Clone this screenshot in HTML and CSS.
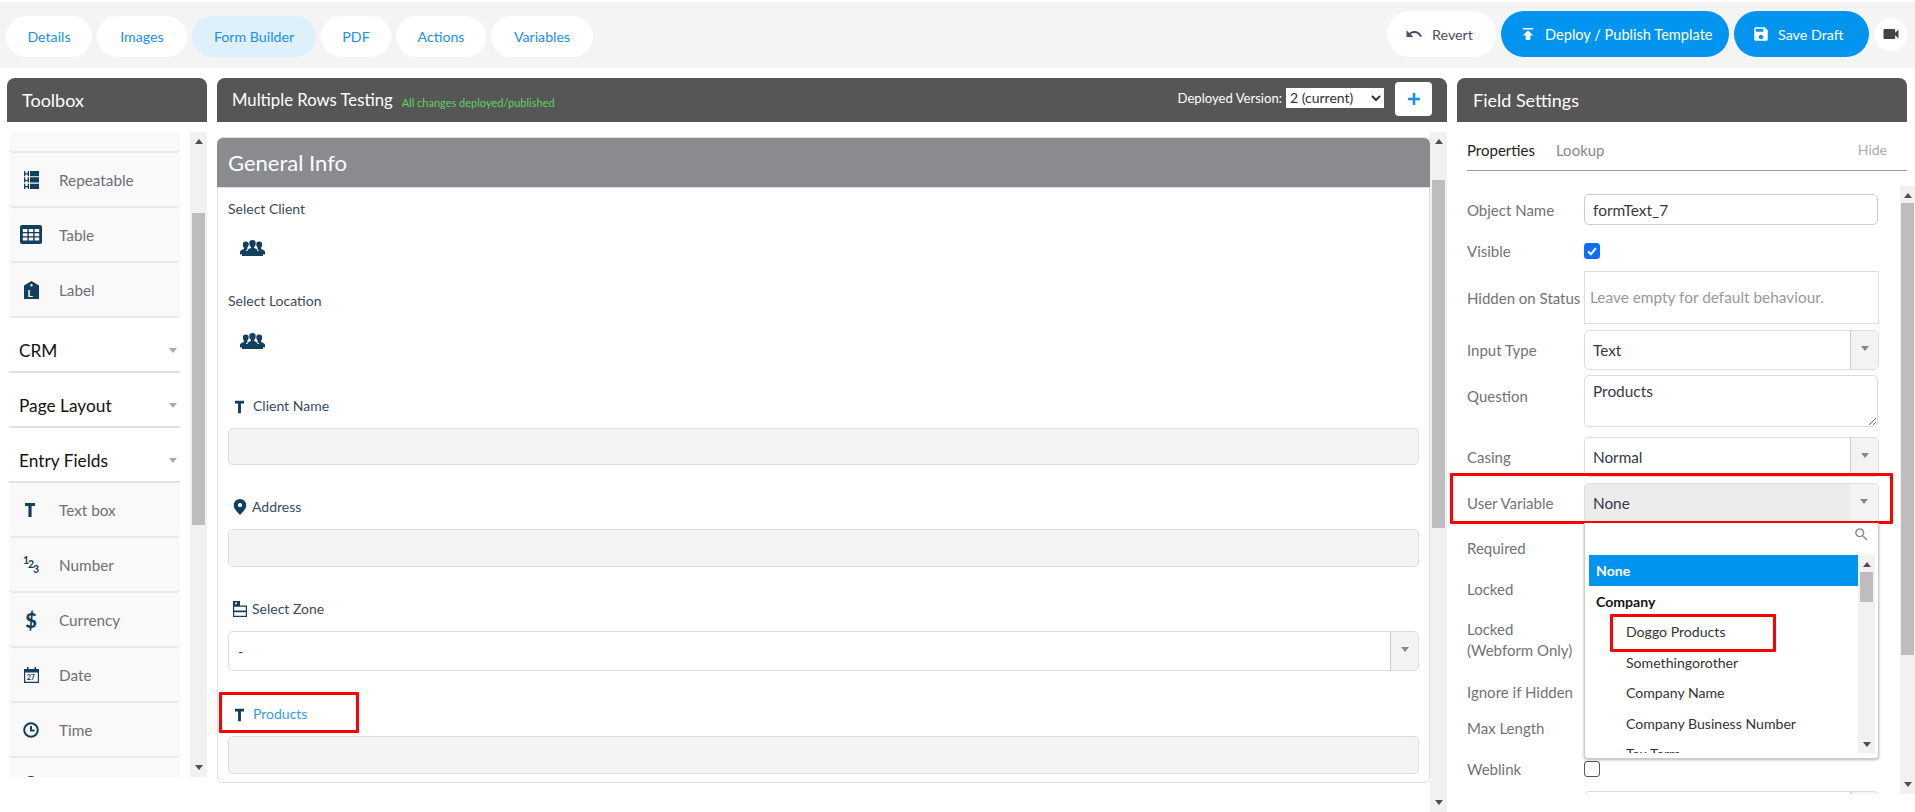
FILE: index.html
```html
<!DOCTYPE html>
<html lang="en">
<head>
<meta charset="utf-8">
<title>Form Builder</title>
<link rel="stylesheet" href="styles.css">
</head>
<body>
<svg class="defs" width="0" height="0" aria-hidden="true">
  <symbol id="i-t" viewBox="0 0 10 14"><path d="M0 0h10v3H6.600v11H3.400V3H0z"/></symbol>
  <symbol id="i-pin" viewBox="0 0 14 18"><path fill-rule="evenodd" d="M7 0a7 7 0 0 1 7 7c0 4-3.500 7.500-7 11C3.500 14.500 0 11 0 7a7 7 0 0 1 7-7zm0 4.600a2.400 2.400 0 1 0 0 4.800 2.400 2.400 0 0 0 0-4.800z"/></symbol>
  <symbol id="i-people" viewBox="0 0 25 16"><path d="M12.500 0a3.200 3.200 0 0 1 3.200 3.400c0 1.700-.9 3-1.700 3.700v.9c1.800.5 3.400 1.200 3.400 2.600V16H7.600v-5.400c0-1.400 1.600-2.100 3.400-2.600v-.9c-.8-.7-1.700-2-1.700-3.700A3.200 3.200 0 0 1 12.500 0z"/><path d="M5.800 1.500a2.900 2.900 0 0 1 2.900 3.100c0 1.500-.8 2.600-1.500 3.200v1l.8.3c-1.200.5-2 1.200-2 2.400V16H2v-1.700L0 14.500v-2.800c0-1.300 1.900-2.200 4-2.800v-1.100C3.300 7.200 2.900 6.100 2.900 4.600A2.900 2.900 0 0 1 5.800 1.500z"/><path d="M19.200 1.500a2.900 2.900 0 0 0-2.900 3.100c0 1.500.8 2.600 1.500 3.200v1l-.8.3c1.200.5 2 1.200 2 2.400V16H23v-1.700l2 .2v-2.800c0-1.300-1.900-2.200-4-2.800v-1.100c.7-.6 1.100-1.700 1.100-3.200a2.900 2.900 0 0 0-2.900-3.100z"/><path d="M4 11h17v5H4z"/></symbol>
  <symbol id="i-zone" viewBox="0 0 14 16"><path fill-rule="evenodd" d="M0 0h7v4.500h7V16H0zm1.200 5.700v3.800h11.600V5.700zm0 5.600v3.500h11.600v-3.500zM2 1.500v1.800h2V1.500z"/></symbol>
  <symbol id="i-search" viewBox="0 0 24 24"><path d="M15.500 14h-.79l-.28-.27A6.470 6.470 0 0 0 16 9.500 6.500 6.500 0 1 0 9.500 16c1.610 0 3.090-.59 4.230-1.570l.27.28v.79l5 4.990L20.490 19l-4.990-5zm-6 0C7.010 14 5 11.990 5 9.500S7.010 5 9.500 5 14 7.010 14 9.500 11.990 14 9.500 14z"/></symbol>
</svg>

<div class="page">
  <header class="topbar">
    <nav class="tabs">
      <a class="tab tab-details">Details</a>
      <a class="tab tab-images">Images</a>
      <a class="tab tab-form is-active">Form Builder</a>
      <a class="tab tab-pdf">PDF</a>
      <a class="tab tab-actions">Actions</a>
      <a class="tab tab-variables">Variables</a>
    </nav>
    <div class="actions">
      <button class="btn btn-light btn-revert"><svg class="btn-icon" viewBox="0 0 24 24"><path d="M12.500 8c-2.650 0-5.050 1-6.900 2.600L2 7v9h9l-3.600-3.600c1.400-1.200 3.200-1.900 5.100-1.900 3.500 0 6.600 2.300 7.600 5.500l2.400-.8C21.100 11 17.200 8 12.500 8z"/></svg>Revert</button>
      <button class="btn btn-blue btn-deploy"><svg class="btn-icon" viewBox="0 0 24 24"><path d="M5 4v2h14V4H5zm0 10h4v6h6v-6h4l-7-7-7 7z"/></svg>Deploy / Publish Template</button>
      <button class="btn btn-blue btn-save"><svg class="btn-icon" viewBox="0 0 24 24"><path d="M17 3H5c-1.100 0-2 .9-2 2v14c0 1.100.9 2 2 2h14c1.100 0 2-.9 2-2V7l-4-4zm-5 16c-1.700 0-3-1.300-3-3s1.300-3 3-3 3 1.300 3 3-1.300 3-3 3zm3-10H5V5h10v4z"/></svg>Save Draft</button>
      <button class="btn-video" aria-label="Video"><svg viewBox="0 0 24 24"><path d="M17 10.500V7c0-.6-.4-1-1-1H4c-.6 0-1 .4-1 1v10c0 .6.400 1 1 1h12c.6 0 1-.4 1-1v-3.500l4 4v-11l-4 4z"/></svg></button>
    </div>
  </header>

  <main class="workspace">
    <section class="col-toolbox">
      <h2 class="panel-head">Toolbox</h2>
      <div class="toolbox-body">
        <div class="toolbox-list">
          <div class="tool tool-cut"></div>
          <div class="tool"><span class="tool-icon"><svg class="ic-rep" viewBox="0 0 15 18"><path d="M0 0h1.300v2.300h2.400V0H5v5.300H3.700V3.500H1.300v1.800H0zm0 6.300h1.300v2.400h2.400V6.300H5v5.300H3.700V9.900H1.300v1.700H0zm0 6.400h1.300V15h2.400v-2.300H5V18H3.700v-1.800H1.300V18H0z"/><path d="M6 0h9v5.300H6zm0 6.300h9v5.300H6zm0 6.400h9V18H6z"/></svg></span>Repeatable</div>
          <div class="tool"><span class="tool-icon"><svg class="ic-table" viewBox="0 0 22 19"><path fill-rule="evenodd" d="M2 0h18a2 2 0 0 1 2 2v15a2 2 0 0 1-2 2H2a2 2 0 0 1-2-2V2a2 2 0 0 1 2-2zm.8 4v3h4.600V4zm6 0v3h4.400V4zm5.800 0v3h4.600V4zM2.800 8.300v3h4.600v-3zm6 0v3h4.400v-3zm5.800 0v3h4.600v-3zM2.800 12.600v3h4.600v-3zm6 0v3h4.400v-3zm5.800 0v3h4.600v-3z"/></svg></span>Table</div>
          <div class="tool"><span class="tool-icon"><svg class="ic-label" viewBox="0 0 15 18"><path fill-rule="evenodd" d="M7.500 0 15 4.500V18H0V4.500zm0 3a1.200 1.200 0 1 0 0 2.400 1.200 1.200 0 0 0 0-2.400z"/><text class="ic-letter" x="3.500" y="15.500">L</text></svg></span>Label</div>
          <div class="tool-section">CRM<i class="caret"></i></div>
          <div class="tool-section">Page Layout<i class="caret"></i></div>
          <div class="tool-section">Entry Fields<i class="caret"></i></div>
          <div class="tool"><span class="tool-icon"><svg class="ic-t"><use href="#i-t"/></svg></span>Text box</div>
          <div class="tool"><span class="tool-icon"><svg class="ic-num" viewBox="0 0 16 17"><text x="0" y="8">1</text><text x="5" y="12">2</text><text x="10" y="16.500">3</text></svg></span>Number</div>
          <div class="tool"><span class="tool-icon"><span class="ic-dollar">$</span></span>Currency</div>
          <div class="tool"><span class="tool-icon"><svg class="ic-cal" viewBox="0 0 15 16"><path fill-rule="evenodd" d="M0 2h3V0h1.500v2h6V0H12v2h3v14H0zm1.200 3.500v9.300h12.600V5.500z"/><text x="2.800" y="13">27</text></svg></span>Date</div>
          <div class="tool"><span class="tool-icon"><svg class="ic-clock" viewBox="0 0 16 16"><circle cx="8" cy="8" r="6.800"/><path d="M8 4v4.500h3.500"/></svg></span>Time</div>
          <div class="tool"><span class="tool-icon"><svg class="ic-pin-s"><use href="#i-pin"/></svg></span></div>
        </div>
        <div class="scrollbar sb-toolbox"><i class="arrow-up"></i><b class="thumb"></b><i class="arrow-down"></i></div>
      </div>
    </section>

    <section class="col-form">
      <div class="panel-head head-form">
        <h2 class="form-title">Multiple Rows Testing</h2>
        <span class="form-status">All changes deployed/published</span>
        <label class="version">Deployed Version:
          <select class="version-select"><option>2 (current)</option></select>
        </label>
        <button class="plus" aria-label="Add"><svg viewBox="0 0 14 14"><path d="M5.500 0h3v5.500H14v3H8.500V14h-3V8.500H0v-3h5.500z"/></svg></button>
      </div>
      <div class="form-body">
        <div class="card">
          <h3 class="card-head">General Info</h3>
          <div class="card-body">
            <div class="q q-client">Select Client</div>
            <svg class="people p-client"><use href="#i-people"/></svg>
            <div class="q q-location">Select Location</div>
            <svg class="people p-location"><use href="#i-people"/></svg>
            <div class="q q-icon q-name"><svg class="ic-t-sm"><use href="#i-t"/></svg>Client Name</div>
            <div class="box box-name"></div>
            <div class="q q-icon q-addr"><svg class="ic-pin"><use href="#i-pin"/></svg>Address</div>
            <div class="box"></div>
            <div class="q q-icon q-zone"><svg class="ic-zone"><use href="#i-zone"/></svg>Select Zone</div>
            <div class="pick pick-zone"><span class="pick-val">-</span><span class="pick-arrow"><i class="caret-sm"></i></span></div>
            <div class="q q-icon q-prod"><svg class="ic-t-sm"><use href="#i-t"/></svg><span class="active-q">Products</span><span class="mark mark-prod"></span></div>
            <div class="box"></div>
          </div>
        </div>
        <div class="scrollbar sb-form"><i class="arrow-up"></i><b class="thumb"></b><i class="arrow-down"></i></div>
      </div>
    </section>

    <section class="col-settings">
      <h2 class="panel-head head-settings">Field Settings</h2>
      <div class="fs-tabs"><span class="fs-tab is-on">Properties</span><span class="fs-tab">Lookup</span><span class="fs-hide">Hide</span></div>
      <div class="fs-scroll">
        <div class="fs-form">
          <div class="row r-name"><label class="lab">Object Name</label><input class="inp" value="formText_7"></div>
          <div class="row r-vis"><label class="lab">Visible</label><span class="check is-on"><svg viewBox="0 0 16 16"><path d="M3.500 8.500 6.700 11.700 12.500 4.800"/></svg></span></div>
          <div class="row r-hidden"><label class="lab">Hidden on Status</label><textarea class="ta ta-hidden" placeholder="Leave empty for default behaviour."></textarea></div>
          <div class="row r-sel r-type"><label class="lab">Input Type</label><div class="pick"><span class="pick-val">Text</span><span class="pick-arrow"><i class="caret-sm"></i></span></div></div>
          <div class="row r-q"><label class="lab">Question</label><textarea class="ta ta-q">Products</textarea></div>
          <div class="row r-sel r-casing"><label class="lab">Casing</label><div class="pick"><span class="pick-val">Normal</span><span class="pick-arrow"><i class="caret-sm"></i></span></div></div>
          <div class="row r-sel r-var">
            <label class="lab">User Variable</label>
            <div class="pick pick-open"><span class="pick-val">None</span><span class="pick-arrow"><i class="caret-sm"></i></span>
              <div class="drop">
                <div class="drop-search"><svg class="ic-search"><use href="#i-search"/></svg></div>
                <div class="drop-main">
                  <ul class="opts">
                    <li class="opt opt-sel">None</li>
                    <li class="opt opt-group">Company</li>
                    <li class="opt opt-child">Doggo Products<span class="mark mark-opt"></span></li>
                    <li class="opt opt-child">Somethingorother</li>
                    <li class="opt opt-child">Company Name</li>
                    <li class="opt opt-child">Company Business Number</li>
                    <li class="opt opt-child">Tax Term</li>
                  </ul>
                  <div class="scrollbar sb-drop"><i class="arrow-up"></i><b class="thumb"></b><i class="arrow-down"></i></div>
                </div>
              </div>
            </div>
            <span class="mark mark-var"></span>
          </div>
          <div class="row r-line r-req"><label class="lab">Required</label></div>
          <div class="row r-line r-lock"><label class="lab">Locked</label></div>
          <div class="row r-line r-lockw"><label class="lab lab-two">Locked<br>(Webform Only)</label></div>
          <div class="row r-line r-ign"><label class="lab">Ignore if Hidden</label></div>
          <div class="row r-line r-max"><label class="lab">Max Length</label></div>
          <div class="row r-web"><label class="lab">Weblink</label><span class="check"></span></div>
          <div class="row r-sel r-next"><label class="lab"></label><div class="pick"><span class="pick-val"></span><span class="pick-arrow"></span></div></div>
        </div>
        <div class="scrollbar sb-fs"><i class="arrow-up"></i><b class="thumb"></b><i class="arrow-down"></i></div>
      </div>
    </section>
  </main>
</div>
</body>
</html>
```
FILE: styles.css
```css
* { box-sizing: border-box; }
html, body { margin: 0; height: 812px; overflow: hidden; background: #fff; }
body { font-family: "Lato", "Open Sans", sans-serif; font-size: 14px; color: #333; }
h2, h3, ul { margin: 0; padding: 0; font-weight: 400; }
.defs { position: absolute; }
.page { width: 1915px; height: 812px; overflow: hidden; }

/* top bar */
.topbar { margin-top: 2px; height: 66px; background: #f4f4f4; display: flex; justify-content: space-between; padding: 0 8px 0 6px; }
.tabs { display: flex; gap: 5px; padding-top: 14px; }
.tab { height: 41px; border-radius: 21px; background: #fff; color: #1a8fec; display: flex; align-items: center; justify-content: center; font-size: 14.200px; }
.tab.is-active { background: #dff0fd; }
.tab-details { width: 86px; }
.tab-images { width: 90px; }
.tab-form { width: 124px; }
.tab-pdf { width: 70px; }
.tab-actions { width: 90px; }
.tab-variables { width: 102px; }
.actions { display: flex; align-items: center; gap: 5px; padding-bottom: 2px; }
.btn { height: 46px; border: 0; border-radius: 23px; display: flex; align-items: center; font: inherit; font-size: 14.300px; white-space: nowrap; }
.btn-icon { width: 18px; height: 18px; fill: currentColor; flex: none; }
.btn-light { background: #fff; color: #4a4f63; }
.btn-blue { background: #0394f0; color: #fff; }
.btn-revert { width: 109px; padding-left: 18px; gap: 9px; }
.btn-deploy { width: 228px; padding-left: 18px; gap: 8px; font-size: 14.600px; }
.btn-save { width: 135px; padding-left: 18px; gap: 8px; }
.btn-video { width: 33px; height: 33px; border: 0; padding: 0; border-radius: 50%; background: #fff; display: flex; align-items: center; justify-content: center; }
.btn-video svg { width: 20px; height: 20px; fill: #444; }

/* columns */
.workspace { display: grid; grid-template-columns: 200px 1230px 458px; column-gap: 10px; padding: 10px 0 0 7px; }
.panel-head { height: 44px; background: #565656; color: #fff; border-radius: 8px 8px 0 0; display: flex; align-items: center; padding-left: 15px; font-size: 18px; }

/* toolbox */
.toolbox-body { display: flex; justify-content: space-between; margin-top: 10px; height: 645px; }
.toolbox-list { width: 173px; height: 645px; overflow: hidden; padding-left: 2px; }
.tool { height: 55px; background: #f9f9f9; border-bottom: 2px solid #e9e9e9; border-radius: 4px; display: flex; align-items: center; color: #6c7078; font-size: 15.300px; }
.tool-cut { height: 21px; }
.tool-icon { width: 50px; flex: none; display: flex; justify-content: center; padding-right: 6px; color: #123f5e; }
.tool-icon svg { fill: #123f5e; }
.ic-rep { width: 15px; height: 18px; }
.ic-table { width: 22px; height: 19px; }
.ic-label { width: 15px; height: 18px; }
.ic-letter { fill: #fff; font: 700 10px "Lato", sans-serif; }
.ic-t { width: 10px; height: 14px; margin-right: 3px; }
.ic-num { width: 16px; height: 17px; overflow: visible; font: 700 10.500px "Lato", sans-serif; }
.ic-dollar { font: 900 20px/1 "Lato", sans-serif; }
.ic-cal { width: 15px; height: 16px; }
.ic-cal text { font: 700 7px "Lato", sans-serif; }
.tool-icon .ic-clock { width: 16px; height: 16px; fill: none; stroke: #123f5e; stroke-width: 2; }
.ic-pin-s { width: 14px; height: 18px; }
.tool-section { height: 55px; border-bottom: 2px solid #e2e2e2; display: flex; align-items: center; justify-content: space-between; padding: 12px 3px 0 10px; color: #111; font-size: 17.300px; background: #fff; }
.caret { border: 4px solid transparent; border-top: 5px solid #aaa; border-bottom: 0; }

/* scrollbars */
.scrollbar { width: 17px; background: #f1f1f1; display: flex; flex-direction: column; align-items: center; }
.thumb { display: block; width: 13px; background: #bdbdbd; }
.arrow-up, .arrow-down { display: block; width: 0; height: 0; border: 4px solid transparent; flex: none; }
.arrow-up { border-top: 0; border-bottom: 5px solid #505050; margin-top: 7px; }
.arrow-down { border-bottom: 0; border-top: 5px solid #505050; margin-top: auto; margin-bottom: 7px; }
.sb-toolbox .thumb { margin-top: 69px; height: 312px; }
.sb-form { height: 680px; }
.sb-form .thumb { margin-top: 36px; height: 348px; }
.sb-fs { width: 15px; height: 608px; flex: none; }
.sb-fs .thumb { margin-top: 5px; height: 452px; }
.sb-drop { height: 199px; flex: none; }
.sb-drop .thumb { margin-top: 5px; height: 30px; }

/* form column */
.head-form { padding-right: 15px; gap: 9px; }
.form-title { font-size: 16.700px; }
.form-status { color: #5fd35f; font-size: 11px; padding-top: 5px; }
.version { margin: 0 0 5px auto; display: flex; align-items: center; gap: 4px; font-size: 13.100px; white-space: nowrap; }
.version-select { width: 98px; height: 20px; margin-right: 2px; font: 14px "Lato", sans-serif; border: 0; background: #fff; color: #333; border-radius: 0; }
.plus { width: 37px; height: 34px; margin-bottom: 3px; border: 0; padding: 0; border-radius: 4px; background: #fff; display: flex; align-items: center; justify-content: center; }
.plus svg { width: 12px; height: 12px; fill: #1a8fec; }
.form-body { display: flex; justify-content: space-between; margin-top: 10px; height: 680px; }
.card { margin-top: 5px; width: 1213px; height: 646px; border: 1px solid #ddd; border-radius: 6px; }
.card-head { height: 50px; margin: 0 -1px; padding-left: 11px; background: #898b8e; color: #fff; font-size: 22px; display: flex; align-items: center; border-radius: 6px 6px 0 0; border-bottom: 1px solid #ddd; }
.card-body { padding: 0 10px; }
.q { height: 20px; line-height: 22px; color: #3a4a60; font-size: 14px; position: relative; }
.q-icon { display: flex; align-items: center; padding-left: 5px; }
.q-client { margin-top: 10px; }
.people { display: block; width: 25px; height: 16px; margin-left: 12px; fill: #123f5e; }
.p-client { margin-top: 22px; }
.q-location { margin-top: 34px; }
.p-location { margin-top: 23px; }
.q-name { margin-top: 47px; }
.q-addr { margin-top: 32px; }
.q-zone { margin-top: 32px; }
.q-prod { margin-top: 33px; }
.ic-t-sm { width: 9px; height: 14px; margin: 1px 9px 0 2px; fill: #123f5e; }
.ic-pin { width: 14px; height: 16px; margin-right: 5px; fill: #123f5e; }
.ic-zone { width: 14px; height: 16px; margin-right: 5px; fill: #123f5e; }
.active-q { color: #3a9bf0; }
.box { height: 38px; margin-top: 12px; background: #f4f4f4; border: 1px solid #ddd; border-radius: 5px; }
.box-name { height: 37px; }
.pick { flex: 1; height: 40px; background: #fff; border: 1px solid #ddd; border-radius: 5px; display: flex; align-items: stretch; position: relative; }
.pick-val { flex: 1; display: flex; align-items: center; padding-left: 8px; color: #333a45; font-size: 15.300px; }
.pick-arrow { width: 28px; background: #f3f3f3; border-left: 1px solid #ccc; border-radius: 0 4px 4px 0; display: flex; align-items: center; justify-content: center; }
.caret-sm { border: 4px solid transparent; border-top: 5px solid #888; border-bottom: 0; margin-bottom: 3px; }
.pick-zone { margin-top: 12px; }
.pick-zone .pick-val { padding-left: 9px; font-size: 14px; }
.mark { position: absolute; border: 3px solid #f00; border-radius: 1px; pointer-events: none; }
.mark-prod { left: -9px; top: -12px; width: 140px; height: 41px; }

/* settings column */
.head-settings { width: 450px; padding-left: 16px; }
.fs-tabs { width: 440px; margin-left: 10px; height: 49px; border-bottom: 1px solid #999; display: flex; align-items: center; gap: 21px; padding-top: 7px; font-size: 15px; color: #888; }
.fs-tab.is-on { color: #222; }
.fs-hide { margin-left: auto; margin-right: 20px; color: #aaa; font-size: 14px; }
.fs-scroll { margin: 15px 0 0 -7px; width: 465px; height: 608px; overflow: hidden; display: flex; position: relative; }
.fs-form { width: 450px; padding: 8px 0 0 17px; }
.row { display: flex; align-items: center; position: relative; width: 412px; }
.lab { width: 117px; flex: none; color: #6f7378; font-size: 15px; line-height: 20px; white-space: nowrap; }
.lab-two { line-height: 21px; }
.inp { width: 294px; height: 31px; padding: 0 8px; border: 1px solid #ccc; border-radius: 5px; font: 15.500px "Lato", sans-serif; color: #333a45; background: #fff; outline: 0; }
.r-vis { height: 16px; margin-top: 18px; }
.check { width: 16px; height: 16px; border: 1px solid #555; border-radius: 3px; background: #fff; display: block; }
.check.is-on { background: #0d6efd; border-color: #0d6efd; }
.check svg { display: block; width: 14px; height: 14px; fill: none; stroke: #fff; stroke-width: 2.200; }
.r-hidden { height: 53px; margin-top: 12px; }
.ta { font: 15.400px "Lato", sans-serif; color: #333a45; border: 1px solid #ddd; background: #fff; outline: 0; }
.ta-hidden { width: 295px; height: 53px; padding: 16px 5px 0; resize: none; overflow: hidden; }
.ta-hidden::placeholder { color: #999; opacity: 1; }
.r-sel { height: 40px; }
.r-type { margin-top: 6px; }
.r-q { height: 52px; margin-top: 5px; align-items: flex-start; }
.r-q .lab { margin-top: 11px; }
.ta-q { width: 294px; height: 52px; padding: 6px 8px; border-radius: 5px; }
.r-casing { margin-top: 10px; }
.r-var { margin-top: 6px; }
.pick-open { background: #ececec; }
.pick-open .pick-arrow { border-left: 0; }
.mark-var { left: -17px; top: -10px; width: 443px; height: 51px; }
.drop { position: absolute; left: -1px; top: 39px; width: 295px; height: 236px; background: #fff; border: 1px solid #ccc; border-top: 0; border-radius: 0 0 4px 4px; box-shadow: 0 1px 3px rgba(0,0,0,.3); z-index: 3; padding: 0 3px 0 4px; }
.drop-search { height: 32px; display: flex; justify-content: flex-end; padding: 3px 5px 0 0; }
.ic-search { width: 17px; height: 17px; fill: #888; }
.drop-main { display: flex; height: 198px; overflow: hidden; }
.opts { list-style: none; width: 269px; flex: none; }
.opt { height: 30.500px; display: flex; align-items: center; color: #333; font-size: 14.100px; position: relative; flex: none; }
.opt-sel { height: 31px; background: #0394f0; color: #fff; font-weight: 700; padding-left: 7px; }
.opt-group { color: #111; font-weight: 700; padding-left: 7px; }
.opt-child { padding-left: 37px; }
.mark-opt { left: 21px; top: -3px; width: 166px; height: 38px; }
.r-line { height: 20px; }
.r-req { margin-top: 15px; }
.r-lock { margin-top: 21px; }
.r-lockw { height: 42px; margin-top: 20px; }
.r-ign { margin-top: 21px; }
.r-max { margin-top: 16px; }
.r-web { height: 16px; margin-top: 23px; }
.r-next { margin-top: 14px; }
.r-name { margin-top: 0; }
```
